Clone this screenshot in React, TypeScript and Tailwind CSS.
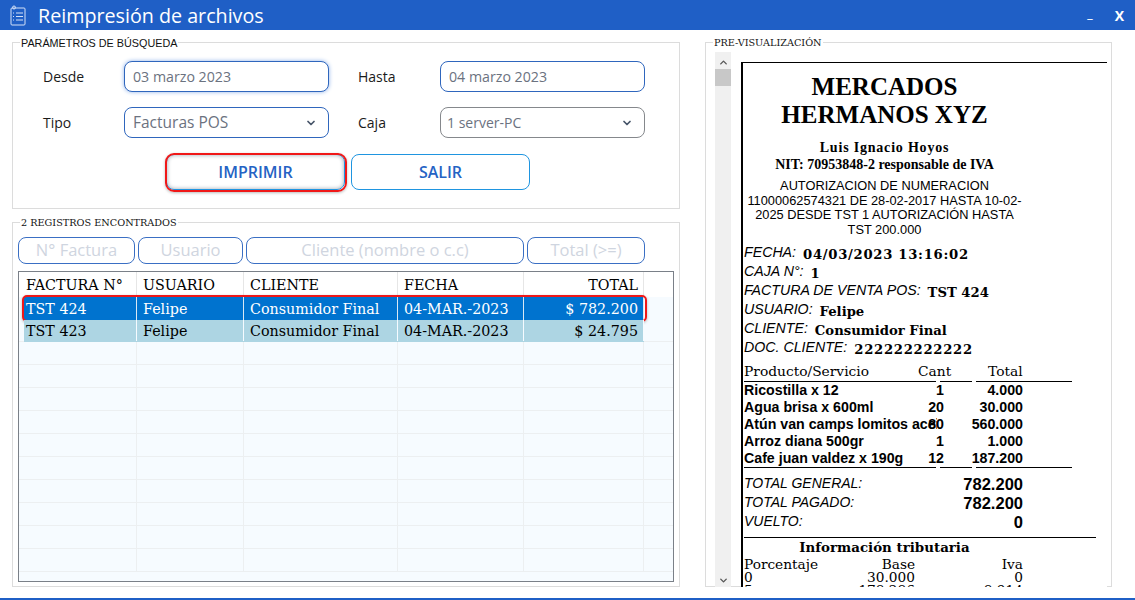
import { ChevronDown, ChevronUp } from 'lucide-react';

const columns = ['w-[118px]', 'w-[107px]', 'w-[154px]', 'w-[126px]', 'w-[120px]', 'flex-1'];
const emptyRows = Array.from({ length: 10 }, (_, i) => i);

const products = [
  { name: 'Ricostilla x 12', cant: '1', total: '4.000' },
  { name: 'Agua brisa x 600ml', cant: '20', total: '30.000' },
  { name: 'Atún van camps lomitos aceite', cant: '80', total: '560.000' },
  { name: 'Arroz diana 500gr', cant: '1', total: '1.000' },
  { name: 'Cafe juan valdez x 190g', cant: '12', total: '187.200' },
];

const ticketFields = [
  { label: 'FECHA:', value: '04/03/2023 13:16:02', spaced: true },
  { label: 'CAJA N°:', value: '1', spaced: false },
  { label: 'FACTURA DE VENTA POS:', value: 'TST 424', spaced: false },
  { label: 'USUARIO:', value: 'Felipe', spaced: false },
  { label: 'CLIENTE:', value: 'Consumidor Final', spaced: false },
  { label: 'DOC. CLIENTE:', value: '222222222222', spaced: true },
];

function Field({ value, className, glow, gray, arrow }: { value: string; className: string; glow?: boolean; gray?: boolean; arrow?: boolean }) {
  return (
    <div
      className={`flex h-[31px] w-[205px] items-center justify-between rounded-lg border bg-white pr-[11px] text-[#6b7280] ${className} ${
        gray ? 'border-[#85888c]' : 'border-[#2f66bd]'
      } ${glow ? 'shadow-[0_0_4px_#8fb2ea]' : ''}`}
    >
      <span>{value}</span>
      {arrow && <ChevronDown size={12} strokeWidth={3.5} className="text-[#475569]" />}
    </div>
  );
}

function Filter({ label, width }: { label: string; width: string }) {
  return (
    <div className={`flex h-[27px] items-center justify-center rounded-lg border border-[#3a6fc4] text-[16.5px] text-[#cfd5e0] ${width}`}>
      {label}
    </div>
  );
}

function Cells({ values, className }: { values: string[]; className: string }) {
  return (
    <>
      {values.map((v, i) => (
        <div
          key={i}
          className={`flex items-center border-r pt-[2px] ${columns[i]} ${className} ${
            i === 4 ? 'justify-end pr-[5px]' : i === 0 ? 'pl-[7px]' : 'pl-[6px]'
          }`}
        >
          {v}
        </div>
      ))}
    </>
  );
}

function Segments() {
  return (
    <div className="flex h-px gap-[4px]">
      <div className="w-[192px] bg-black" />
      <div className="w-[32px] bg-black" />
      <div className="w-[96px] bg-black" />
    </div>
  );
}

export default function App() {
  return (
    <div className="flex h-[600px] w-full flex-col overflow-hidden bg-white font-['Open_Sans',sans-serif] text-[#1a1a1a]">
      {/* Title bar */}
      <div className="flex h-[30px] shrink-0 items-center bg-[#1f5fc6] text-white">
        <svg viewBox="0 0 16 21" className="ml-[10px] h-[21px] w-[16px] text-[#d5e2f7]" fill="none" stroke="currentColor" strokeWidth="1">
          <rect x="1" y="3" width="14" height="17" rx="1" />
          <circle cx="4" cy="2.5" r="1.5" />
          <path d="M3 8h1M3 11.5h1M3 15h1M6 8h7M6 11.5h7M6 15h7" />
        </svg>
        <span className="ml-[12px] mt-[2px] text-[19.7px]">Reimpresión de archivos</span>
        <span className="ml-auto mr-[22px] mt-[-2px] text-[13px] font-bold">_</span>
        <span className="mr-[11px] text-[14px] font-bold">X</span>
      </div>

      <div className="flex flex-1 pl-[12px] pt-[5px]">
        {/* Left column */}
        <div className="w-[668px] shrink-0">
          <fieldset className="h-[174px] border border-[#dcdcdc]">
            <legend className="ml-[7px] px-[1px] pt-[2px] font-['Liberation_Sans',sans-serif] text-[10.8px] leading-[12px] text-[#111]">
              PARÁMETROS DE BÚSQUEDA
            </legend>
            <div className="flex flex-col gap-[15px] pl-[30px] pt-[12px]">
              <div className="flex items-center">
                <span className="w-[81px] text-[14px]">Desde</span>
                <Field value="03 marzo 2023" className="pl-[8px] text-[14.2px]" glow />
                <span className="ml-[29px] w-[82px] text-[14px]">Hasta</span>
                <Field value="04 marzo 2023" className="pl-[8px] text-[14.2px]" />
              </div>
              <div className="flex items-center">
                <span className="w-[81px] text-[14px]">Tipo</span>
                <Field value="Facturas POS" className="pl-[8px] text-[15.5px]" arrow />
                <span className="ml-[29px] w-[82px] text-[14px]">Caja</span>
                <Field value="1 server-PC" className="pl-[6px] text-[14px]" gray arrow />
              </div>
            </div>
            <div className="ml-[153px] mt-[16px] flex gap-[6px]">
              <div className="relative flex h-[36px] w-[179px] items-center justify-center rounded-lg border border-[#1f95e0] text-[16px] font-semibold text-[#2563c4] shadow-[inset_0_0_4px_#9aa5b1]">
                IMPRIMIR
                <div className="absolute -bottom-[3px] -left-[2px] -right-[3px] -top-[2px] rounded-[9px] border-2 border-[#f01818] shadow-[0_1px_3px_#0004]" />
              </div>
              <div className="flex h-[36px] w-[179px] items-center justify-center rounded-lg border border-[#1f95e0] text-[16px] font-semibold text-[#2563c4]">
                SALIR
              </div>
            </div>
          </fieldset>

          <fieldset className="mt-[6px] h-[372px] border border-[#dcdcdc]">
            <legend className="ml-[7px] px-[1px] pt-[2px] font-['DejaVu_Serif',serif] text-[9.7px] leading-[12px] text-[#111]">
              2 REGISTROS ENCONTRADOS
            </legend>
            <div className="flex gap-[3px] pl-[5px] pt-[8px]">
              <Filter label="N° Factura" width="w-[117px]" />
              <Filter label="Usuario" width="w-[105px]" />
              <Filter label="Cliente (nombre o c.c)" width="w-[278px]" />
              <Filter label="Total (>=)" width="w-[118px]" />
            </div>

            {/* Results grid */}
            <div className="ml-[5px] mt-[7px] flex h-[311px] w-[656px] flex-col overflow-hidden border border-[#7a8088] font-['DejaVu_Serif',serif] text-[14.3px] leading-none">
              <div className="flex h-[25px] shrink-0 text-black">
                <Cells values={['FACTURA N°', 'USUARIO', 'CLIENTE', 'FECHA', 'TOTAL']} className="border-[#e6e6e6]" />
              </div>
              <div className="flex-1 bg-[#f6fbff]">
                <div className="relative flex h-[23px] bg-[#f6fbff]">
                  <div className="absolute left-[5px] top-0 h-[23px] w-[620px] bg-[#0073cf]" />
                  <div className="relative flex text-white">
                    <Cells values={['TST 424', 'Felipe', 'Consumidor Final', '04-MAR.-2023', '$ 782.200']} className="h-[23px] border-[#d9e8f5]" />
                  </div>
                  <div className="absolute left-[3px] top-[-2px] h-[27px] w-[625px] rounded-[5px] border-2 border-[#f01818] shadow-[0_1px_3px_#0004]" />
                </div>
                <div className="relative flex h-[22px] border-b border-[#eceff1]">
                  <div className="absolute left-[5px] top-0 h-[22px] w-[620px] bg-[#add5e3]" />
                  <div className="relative flex text-black">
                    <Cells values={['TST 423', 'Felipe', 'Consumidor Final', '04-MAR.-2023', '$ 24.795']} className="border-[#f6fbff]" />
                  </div>
                </div>
                {emptyRows.map((row) => (
                  <div key={row} className="flex h-[23px] border-b border-[#eceff1]">
                    {columns.map((col, i) => (
                      <div key={i} className={`${col} ${i < 5 ? 'border-r border-[#eceff1]' : ''}`} />
                    ))}
                  </div>
                ))}
              </div>
            </div>
          </fieldset>
        </div>

        {/* Preview */}
        <div className="ml-[25px] w-[407px] shrink-0">
          <fieldset className="relative h-[552px] border border-[#dcdcdc]">
            <legend className="ml-[7px] px-[1px] pt-[2px] font-['DejaVu_Serif',serif] text-[9.7px] leading-[12px] text-[#111]">
              PRE-VISUALIZACIÓN
            </legend>
            <div className="relative z-10 ml-[9px] mt-[3px] flex h-[535px]">
              {/* Scrollbar */}
              <div className="flex h-full w-[16px] shrink-0 flex-col items-center bg-[#f0f0f0] pt-[5px] text-[#555]">
                <ChevronUp size={11} strokeWidth={3} />
                <div className="mt-[1px] h-[17px] w-full bg-[#c8c8c8]" />
                <div className="flex-1" />
                <ChevronDown size={11} strokeWidth={3} className="mb-[1px]" />
              </div>

              {/* Ticket */}
              <div className="ml-[10px] mt-[10px] w-[366px] overflow-hidden border-l-2 border-t border-black bg-white pl-[1px] text-black">
                <div className="w-[281px] text-center">
                  <div className="mt-[10px] font-['Liberation_Serif',serif] text-[25px] font-bold leading-[28px]">
                    MERCADOS
                    <br />
                    HERMANOS XYZ
                  </div>
                  <div className="mt-[10px] font-['Liberation_Serif',serif] text-[14px] font-bold leading-[17px]">
                    <span className="tracking-[0.8px]">Luis Ignacio Hoyos</span>
                    <br />
                    <span className="whitespace-nowrap">NIT: 70953848-2 responsable de IVA</span>
                  </div>
                  <div className="mt-[6px] whitespace-nowrap font-['Liberation_Sans',sans-serif] text-[12.8px] leading-[14.5px]">
                    AUTORIZACION DE NUMERACION
                    <br />
                    11000062574321 DE 28-02-2017 HASTA 10-02-
                    <br />
                    2025 DESDE TST 1 AUTORIZACIÓN HASTA
                    <br />
                    TST 200.000
                  </div>
                </div>

                <div className="mt-[6px] flex flex-col">
                  {ticketFields.map((f) => (
                    <div key={f.label} className="flex h-[19px] items-start whitespace-nowrap">
                      <span className="font-['Liberation_Sans',sans-serif] text-[14.2px] italic leading-[19px]">{f.label}</span>
                      <span className={`ml-[7px] mt-[2px] font-['DejaVu_Serif',serif] text-[13.2px] font-bold leading-[19px] ${f.spaced ? 'tracking-[0.7px]' : ''}`}>
                        {f.value}
                      </span>
                    </div>
                  ))}
                </div>

                <div className="mt-[6px] flex h-[18px] font-['DejaVu_Serif',serif] text-[13.8px] leading-[17px]">
                  <span className="w-[174px]">Producto/Servicio</span>
                  <span className="w-[45px]">Cant</span>
                  <span className="ml-[25px]">Total</span>
                </div>
                <Segments />

                <div className="font-['Liberation_Sans',sans-serif] text-[14.2px] font-bold leading-[17px]">
                  {products.map((p) => (
                    <div key={p.name} className="flex h-[17px] whitespace-nowrap">
                      <span className="w-[193px] overflow-hidden">{p.name}</span>
                      <span className="ml-[-13px] w-[20px] text-right">{p.cant}</span>
                      <span className="w-[79px] text-right">{p.total}</span>
                    </div>
                  ))}
                </div>
                <Segments />

                <div className="mt-[7px] flex flex-col">
                  {[
                    ['TOTAL GENERAL:', '782.200'],
                    ['TOTAL PAGADO:', '782.200'],
                    ['VUELTO:', '0'],
                  ].map(([label, value]) => (
                    <div key={label} className="flex h-[19px] w-[279px] items-center justify-between">
                      <span className="mt-[-3px] font-['Liberation_Sans',sans-serif] text-[14px] italic">{label}</span>
                      <span className="font-['Liberation_Sans',sans-serif] text-[16.5px] font-bold">{value}</span>
                    </div>
                  ))}
                </div>

                <div className="mt-[5px] h-px w-[352px] bg-black" />
                <div className="w-[281px] text-center font-['DejaVu_Serif',serif] text-[13.4px] font-bold leading-[18px]">
                  Información tributaria
                </div>
                <div className="mt-[2px] font-['DejaVu_Serif',serif] text-[13.7px] leading-[13px]">
                  {[
                    ['Porcentaje', 'Base', 'Iva'],
                    ['0', '30.000', '0'],
                    ['5', '178.286', '8.914'],
                  ].map(([pct, base, iva]) => (
                    <div key={pct} className="flex w-[279px]">
                      <span className="w-[80px]">{pct}</span>
                      <span className="w-[91px] text-right">{base}</span>
                      <span className="w-[108px] text-right">{iva}</span>
                    </div>
                  ))}
                </div>
              </div>
            </div>
          </fieldset>
        </div>
      </div>

      <div className="h-[2px] shrink-0 bg-[#1f5fc6]" />
    </div>
  );
}
